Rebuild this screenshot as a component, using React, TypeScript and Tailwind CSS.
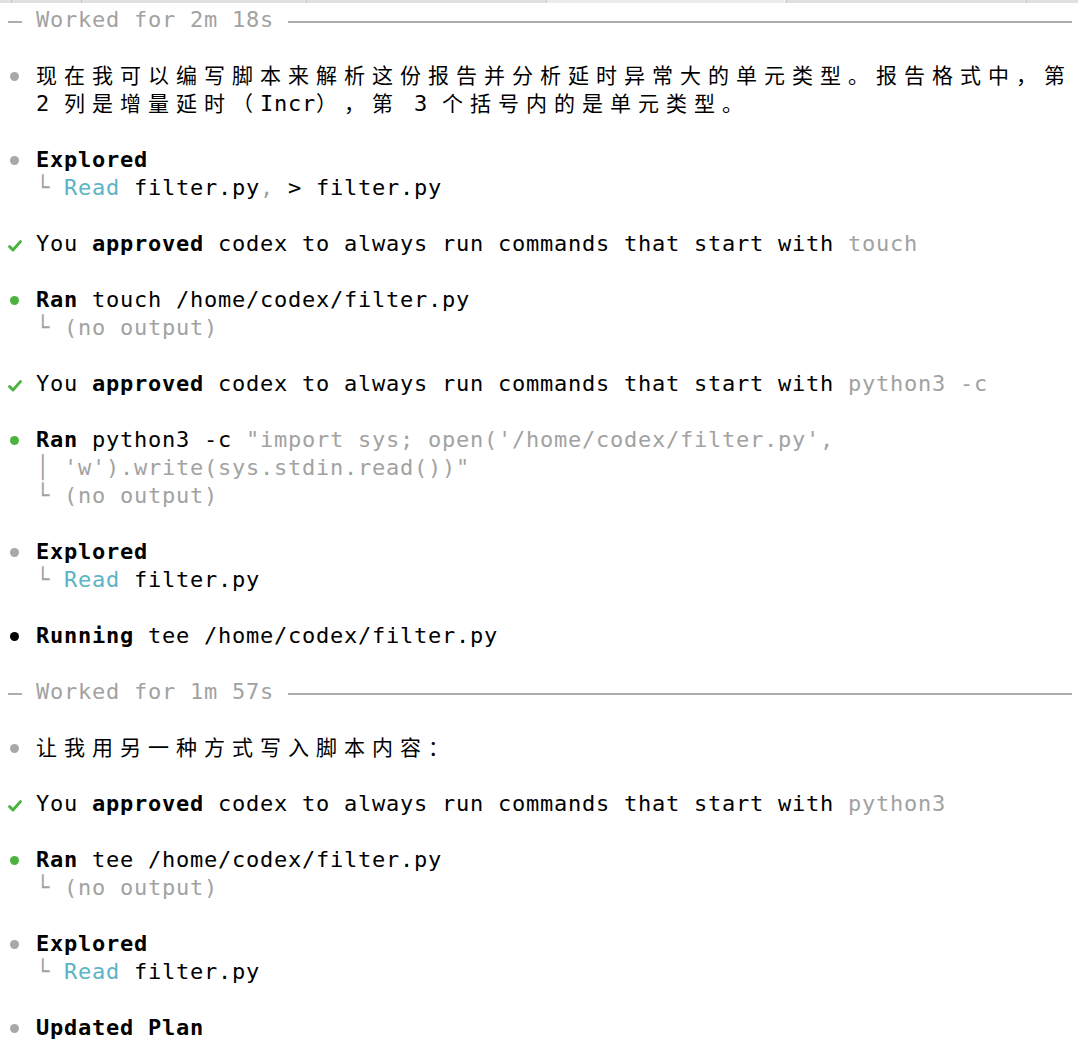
import React from "react";

type Tone = "plain" | "gray" | "cyan" | "bold";
type Seg = { t: string; tone?: Tone };
type Mark = "gray" | "green" | "black" | "check";
type Line = { rule?: string; mark?: Mark; segs?: Seg[] };

const toneClass: Record<Tone, string> = {
  plain: "text-black",
  gray: "text-[#a2a2a2]",
  cyan: "text-[#5bb4c5]",
  bold: "text-black font-bold",
};

const isWide = (ch: string) =>
  /[\u2E80-\u9FFF\uF900-\uFAFF\uFE30-\uFE4F\uFF00-\uFF60\uFFE0-\uFFE6\u3000-\u303F]/.test(ch);

const approved = (what: string): Line => ({
  mark: "check",
  segs: [
    { t: "You " },
    { t: "approved", tone: "bold" },
    { t: " codex to always run commands that start with " },
    { t: what, tone: "gray" },
  ],
});

const noOutput: Line = { segs: [{ t: "└ (no output)", tone: "gray" }] };

const readLine = (rest: Seg[]): Line => ({
  segs: [{ t: "└ ", tone: "gray" }, { t: "Read", tone: "cyan" }, ...rest],
});

const explored: Line = { mark: "gray", segs: [{ t: "Explored", tone: "bold" }] };

const lines: Line[] = [
  { rule: "Worked for 2m 18s" },
  {},
  {
    mark: "gray",
    segs: [{ t: "现在我可以编写脚本来解析这份报告并分析延时异常大的单元类型。报告格式中，第" }],
  },
  { segs: [{ t: "2 列是增量延时（Incr），第 3 个括号内的是单元类型。" }] },
  {},
  explored,
  readLine([{ t: " filter.py" }, { t: ",", tone: "gray" }, { t: " > filter.py" }]),
  {},
  approved("touch"),
  {},
  { mark: "green", segs: [{ t: "Ran", tone: "bold" }, { t: " touch /home/codex/filter.py" }] },
  noOutput,
  {},
  approved("python3 -c"),
  {},
  {
    mark: "green",
    segs: [
      { t: "Ran", tone: "bold" },
      { t: " python3 -c " },
      { t: "\"import sys; open('/home/codex/filter.py',", tone: "gray" },
    ],
  },
  { segs: [{ t: "│ 'w').write(sys.stdin.read())\"", tone: "gray" }] },
  noOutput,
  {},
  explored,
  readLine([{ t: " filter.py" }]),
  {},
  { mark: "black", segs: [{ t: "Running", tone: "bold" }, { t: " tee /home/codex/filter.py" }] },
  {},
  { rule: "Worked for 1m 57s" },
  {},
  { mark: "gray", segs: [{ t: "让我用另一种方式写入脚本内容：" }] },
  {},
  approved("python3"),
  {},
  { mark: "green", segs: [{ t: "Ran", tone: "bold" }, { t: " tee /home/codex/filter.py" }] },
  noOutput,
  {},
  explored,
  readLine([{ t: " filter.py" }]),
  {},
  { mark: "gray", segs: [{ t: "Updated Plan", tone: "bold" }] },
];

function Cells({ text, tone = "plain" }: { text: string; tone?: Tone }) {
  return (
    <>
      {[...text].map((ch, i) =>
        isWide(ch) ? (
          <span
            key={i}
            className={`w-[28px] shrink-0 font-['Noto_Sans_CJK_SC',sans-serif] text-[21px] leading-[24px] ${toneClass[tone]}`}
          >
            {ch}
          </span>
        ) : (
          <span key={i} className={`w-[14px] shrink-0 whitespace-pre ${toneClass[tone]}`}>
            {ch}
          </span>
        )
      )}
    </>
  );
}

function Marker({ kind }: { kind?: Mark }) {
  return (
    <div className="flex w-[28px] shrink-0 items-start">
      {kind === "check" && (
        <svg width="14" height="12" viewBox="0 0 14 12" className="mt-[10px]">
          <path
            d="M1.6 6.6 L5 10 L12.4 1.6"
            fill="none"
            stroke="#4cb341"
            strokeWidth="2.9"
            strokeLinecap="round"
            strokeLinejoin="round"
          />
        </svg>
      )}
      {kind === "gray" && <div className="ml-[2px] mt-[10px] h-[9px] w-[9px] rounded-full bg-[#a8a8a8]" />}
      {kind === "green" && <div className="ml-[2px] mt-[10px] h-[9px] w-[9px] rounded-full bg-[#4cb341]" />}
      {kind === "black" && <div className="ml-[2px] mt-[10px] h-[9px] w-[9px] rounded-full bg-black" />}
    </div>
  );
}

function Row({ line }: { line: Line }) {
  if (line.rule) {
    return (
      <div className="flex h-[28px]">
        <div className="mt-[15px] h-[2px] w-[14px] shrink-0 bg-[#adadad]" />
        <span className="w-[14px] shrink-0" />
        <Cells text={line.rule} tone="gray" />
        <span className="w-[14px] shrink-0" />
        <div className="mt-[15px] h-[2px] flex-1 bg-[#adadad]" />
      </div>
    );
  }
  return (
    <div className="flex h-[28px]">
      <Marker kind={line.mark} />
      {line.segs?.map((s, i) => <Cells key={i} text={s.t} tone={s.tone} />)}
    </div>
  );
}

export default function App() {
  return (
    <div className="h-[1048px] w-[1078px] overflow-hidden bg-white font-['DejaVu_Sans_Mono',monospace] text-[22px] leading-[28px]">
      <div className="flex h-[3px] bg-[#e0e0e0]">
        <div className="w-[12px] border-r border-[#c6c6c6]" />
        <div className="w-[70px] border-r border-[#c6c6c6]" />
        <div className="w-[225px] border-r border-[#c6c6c6]" />
        <div className="w-[240px] border-r border-[#c6c6c6]" />
        <div className="w-[240px] border-r border-[#c6c6c6] bg-[#ededed]" />
        <div className="w-[240px] border-r border-[#c6c6c6]" />
        <div className="flex-1" />
      </div>
      <div className="w-[1072px] pl-[8px] pt-[3px]">
        {lines.map((line, i) => (
          <Row key={i} line={line} />
        ))}
      </div>
    </div>
  );
}
